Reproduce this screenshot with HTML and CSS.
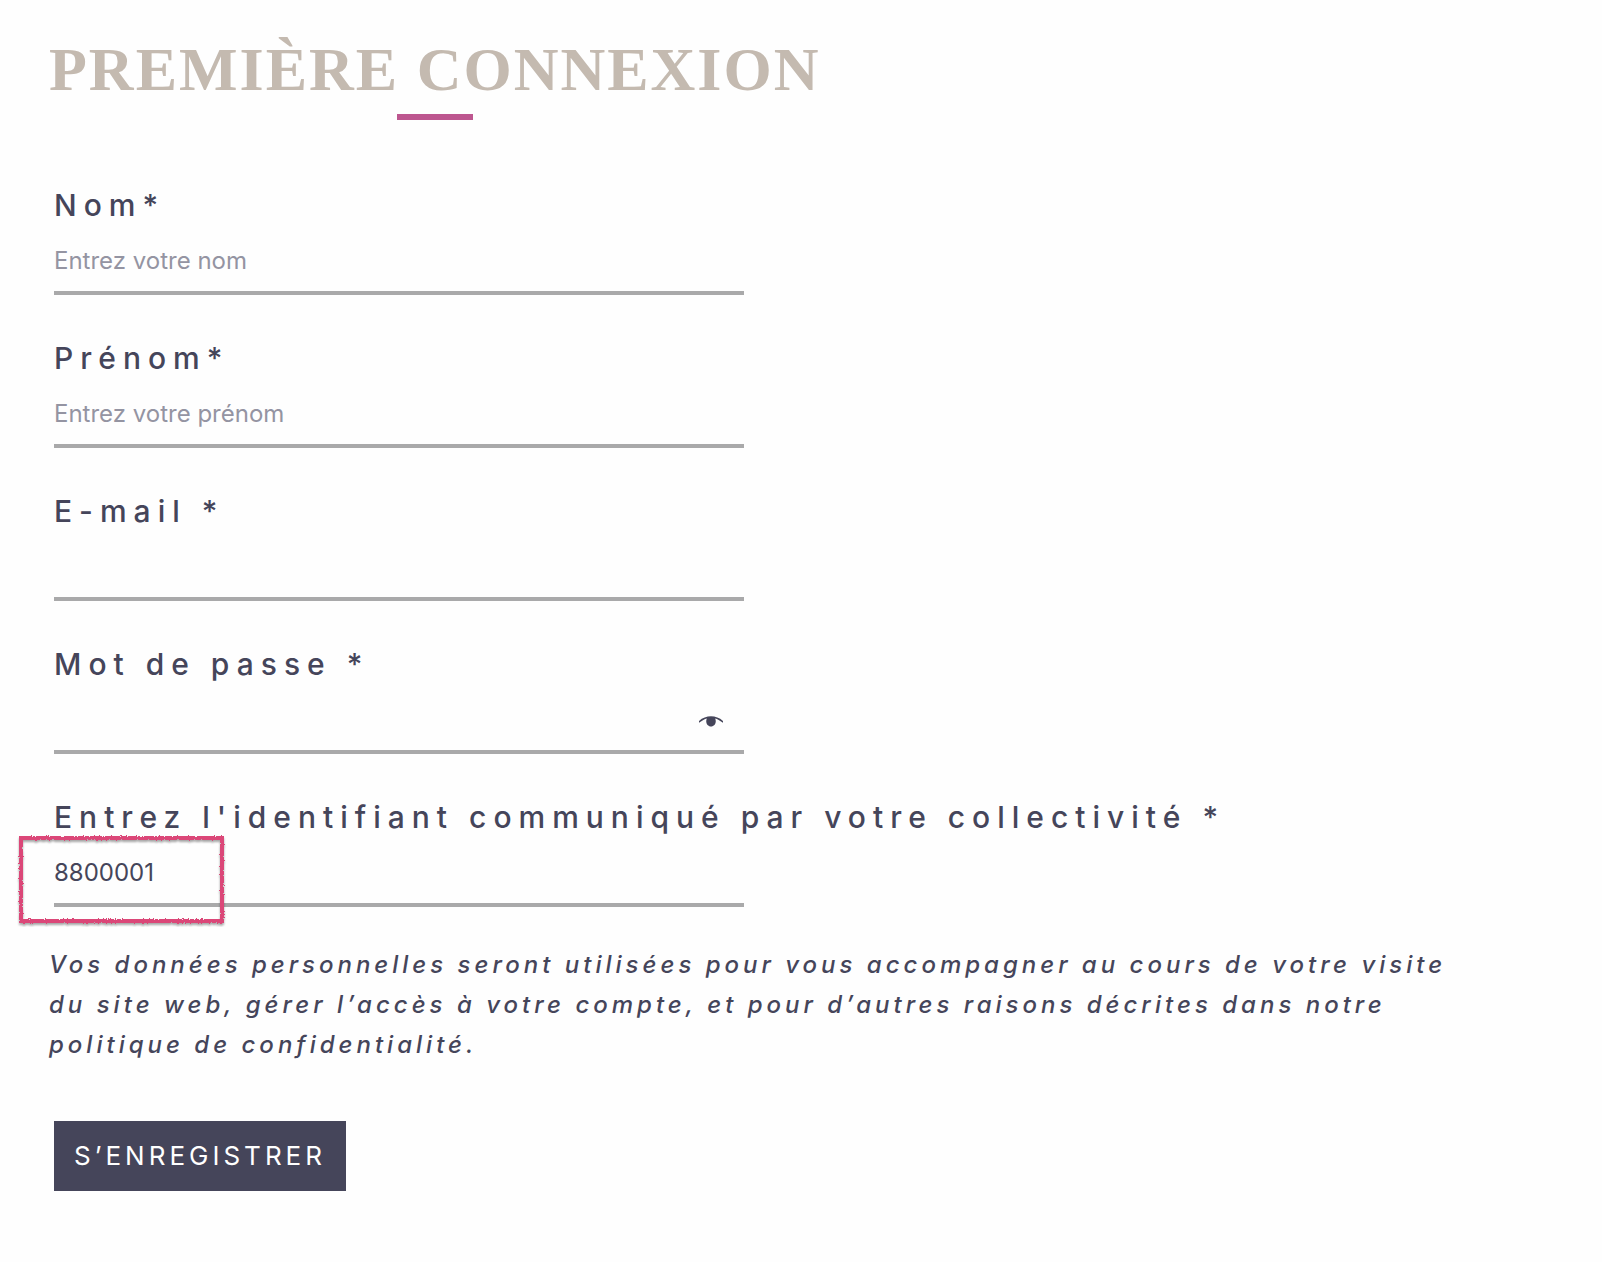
FILE: index.html
```
<!DOCTYPE html>
<html lang="fr">
<head>
    <meta charset="UTF-8">
    <meta name="viewport" content="width=device-width, initial-scale=1.0">
    <title>Première connexion</title>
    <link rel="stylesheet" href="styles.css">
</head>
<body>

    <main class="container">
        <h1>Première connexion</h1>

        <form class="register">
            <div class="field">
                <label for="nom">Nom*</label>
                <input type="text" id="nom" placeholder="Entrez votre nom" required>
            </div>

            <div class="field">
                <label for="prenom">Prénom*</label>
                <input type="text" id="prenom" placeholder="Entrez votre prénom" required>
            </div>

            <div class="field">
                <label for="email">E-mail *</label>
                <input type="email" id="email" required>
            </div>

            <div class="field">
                <label for="password">Mot de passe *</label>
                <div class="input-wrap">
                    <input type="password" id="password" required>
                    <button type="button" class="toggle" aria-label="Afficher le mot de passe">
                        <svg width="24" height="11" viewBox="0 0 24 11">
                            <path d="M0 5C7 -1.2 17 -1.2 24 5V6.8C20.5 4.4 18.5 3.3 16.2 2.6C17.9 6.7 15.6 10.6 12 10.6C8.4 10.6 6.1 6.7 7.8 2.6C5.5 3.3 3.5 4.4 0 6.8Z" fill="currentColor"/>
                        </svg>
                    </button>
                </div>
            </div>

            <div class="field">
                <label for="identifiant">Entrez l'identifiant communiqué par votre collectivité *</label>
                <div class="input-wrap">
                    <input type="text" id="identifiant" value="8800001" required>
                    <!-- hand-drawn frame around the code -->
                    <svg class="marker" width="212" height="94" viewBox="0 0 212 94">
                        <filter id="rough" x="-5%" y="-5%" width="110%" height="115%">
                            <feTurbulence type="fractalNoise" baseFrequency="0.6" numOctaves="2" result="noise"/>
                            <feDisplacementMap in="SourceGraphic" in2="noise" scale="3" xChannelSelector="R" yChannelSelector="G" result="line"/>
                            <feDropShadow in="line" dx="0" dy="2" stdDeviation="1" flood-color="#000" flood-opacity="0.35"/>
                        </filter>
                        <rect x="5" y="5" width="201" height="83" fill="none" stroke="#db4678" stroke-width="4" filter="url(#rough)"/>
                    </svg>
                </div>
            </div>

            <p class="privacy">Vos données personnelles seront utilisées pour vous accompagner au cours de votre visite du site web, gérer l’accès à votre compte, et pour d’autres raisons décrites dans notre politique de confidentialité.</p>

            <button type="submit" class="submit">S’enregistrer</button>
        </form>
    </main>

</body>
</html>
```
FILE: styles.css
```
* {
    box-sizing: border-box;
}

body {
    font-family: Inter, "Liberation Sans", sans-serif;
    margin: 0;
    background-color: #fefefe;
    color: #45455a;
}

.container {
    padding: 31px 140px 70px 49px;
}

h1 {
    display: inline-block;
    margin: 0 0 67px;
    font-family: "Liberation Serif", serif;
    font-size: 62px;
    font-weight: bold;
    line-height: 76px;
    letter-spacing: 2px;
    text-transform: uppercase;
    color: #c4bab0;
}

h1::after {
    content: "";
    display: block;
    width: 76px;
    height: 6px;
    margin: 7px auto 0;
    background-color: #bd568f;
}

.field {
    padding-left: 5px;
    margin-bottom: 45px;
}

.field label {
    display: block;
    font-size: 30px;
    font-weight: 500;
    line-height: 36px;
    letter-spacing: 7px;
}

.field input {
    display: block;
    width: 100%;
    max-width: 690px;
    height: 72px;
    padding: 6px 0 0;
    border: none;
    border-bottom: 4px solid #a9a9aa;
    border-radius: 0;
    background: transparent;
    font-family: inherit;
    font-size: 24px;
    color: inherit;
    outline: none;
}

.field input::placeholder {
    color: #9494a2;
    opacity: 1;
}

.input-wrap {
    position: relative;
    max-width: 690px;
}

.toggle {
    position: absolute;
    right: 21px;
    bottom: 27px;
    display: flex;
    padding: 0;
    border: none;
    background: none;
    color: inherit;
    cursor: pointer;
}

.marker {
    position: absolute;
    left: -38px;
    top: -2px;
    pointer-events: none;
}

.privacy {
    margin: -7px 0 56px;
    font-size: 24px;
    font-style: italic;
    font-weight: 500;
    line-height: 40px;
    letter-spacing: 4px;
}

.submit {
    margin-left: 5px;
    padding: 0 20px;
    border: none;
    background-color: #45455a;
    color: #fff;
    font-family: inherit;
    font-size: 26px;
    font-weight: 400;
    line-height: 70px;
    letter-spacing: 4px;
    text-transform: uppercase;
    cursor: pointer;
}
```
